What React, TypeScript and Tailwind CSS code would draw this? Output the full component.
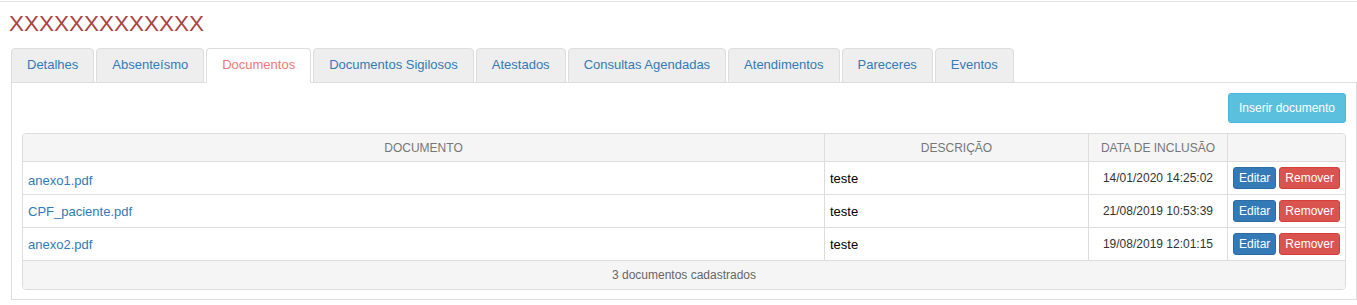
const tabs = [
  "Detalhes",
  "Absenteísmo",
  "Documentos",
  "Documentos Sigilosos",
  "Atestados",
  "Consultas Agendadas",
  "Atendimentos",
  "Pareceres",
  "Eventos",
];

const docs = [
  { name: "anexo1.pdf", desc: "teste", date: "14/01/2020 14:25:02" },
  { name: "CPF_paciente.pdf", desc: "teste", date: "21/08/2019 10:53:39" },
  { name: "anexo2.pdf", desc: "teste", date: "19/08/2019 12:01:15" },
];

const cols = "grid grid-cols-[801px_264px_139px_119px]";

export default function App() {
  const active = "Documentos";

  return (
    <div className="min-h-[305px] bg-white font-['Liberation_Sans',Arial,sans-serif] text-[#333]">
      <div className="pt-px">
        <div className="h-px bg-[#e5e5e5]" />
      </div>

      <h1 className="mt-[10px] h-[24px] pl-[9px] text-[22.5px] leading-[24px] text-[#a94442]">
        XXXXXXXXXXXXX
      </h1>

      <ul className="mt-[12px] ml-[11px] flex border-b border-[#ddd]">
        {tabs.map((tab) => {
          const isActive = tab === active;
          return (
            <li
              key={tab}
              className={
                isActive
                  ? "-mb-px mr-[2px] h-[35px] rounded-t-[4px] border border-[#ddd] border-b-white bg-white px-[15px] text-[13px] leading-[32px] text-[#f0787a]"
                  : "-mb-px mr-[2px] h-[35px] rounded-t-[4px] border border-[#ddd] bg-[#eee] px-[15px] text-[13px] leading-[32px] text-[#337ab7]"
              }
            >
              {tab}
            </li>
          );
        })}
      </ul>

      <div className="ml-[11px] border-x border-b border-[#ddd] px-[10px] pt-[10px] pb-[9px]">
        <div className="flex justify-end">
          <button className="h-[30px] rounded-[3px] border border-[#46b8da] bg-[#5bc0de] px-[10px] text-[12px] text-white">
            Inserir documento
          </button>
        </div>

        <div className="mt-[10px] overflow-hidden rounded-[4px] border border-[#ddd]">
          {/* header */}
          <div className={`${cols} h-[28px] border-b border-[#ddd] bg-[#f5f5f5] text-[12px] text-[#777]`}>
            <div className="flex items-center justify-center">DOCUMENTO</div>
            <div className="flex items-center justify-center border-l border-[#ddd]">DESCRIÇÃO</div>
            <div className="flex items-center justify-center border-l border-[#ddd]">DATA DE INCLUSÃO</div>
            <div className="border-l border-[#ddd]" />
          </div>

          {docs.map((d, i) => (
            <div key={d.name} className={`${cols} h-[33px] border-b border-[#ddd]`}>
              <div className={i === 0 ? "flex items-center pt-[5px] pl-[5px]" : "flex items-center pt-[2px] pl-[5px]"}>
                <a href="#" className="text-[13px] text-[#337ab7]">
                  {d.name}
                </a>
              </div>
              <div className="flex items-center border-l border-[#ddd] pt-px pl-[5px] text-[13px] text-black">
                {d.desc}
              </div>
              <div className="flex items-center justify-center border-l border-[#ddd] text-[12px] text-[#333]">
                {d.date}
              </div>
              <div className="flex items-center gap-[3px] border-l border-[#ddd] pl-[5px]">
                <button className="h-[22px] rounded-[3px] border border-[#2e6da4] bg-[#337ab7] px-[5px] text-[12px] text-white">
                  Editar
                </button>
                <button className="h-[22px] rounded-[3px] border border-[#d43f3a] bg-[#d9534f] px-[5px] text-[12px] text-white">
                  Remover
                </button>
              </div>
            </div>
          ))}

          <div className="flex h-[28px] items-center justify-center bg-[#f5f5f5] text-[12px] text-[#666]">
            3 documentos cadastrados
          </div>
        </div>
      </div>
    </div>
  );
}
